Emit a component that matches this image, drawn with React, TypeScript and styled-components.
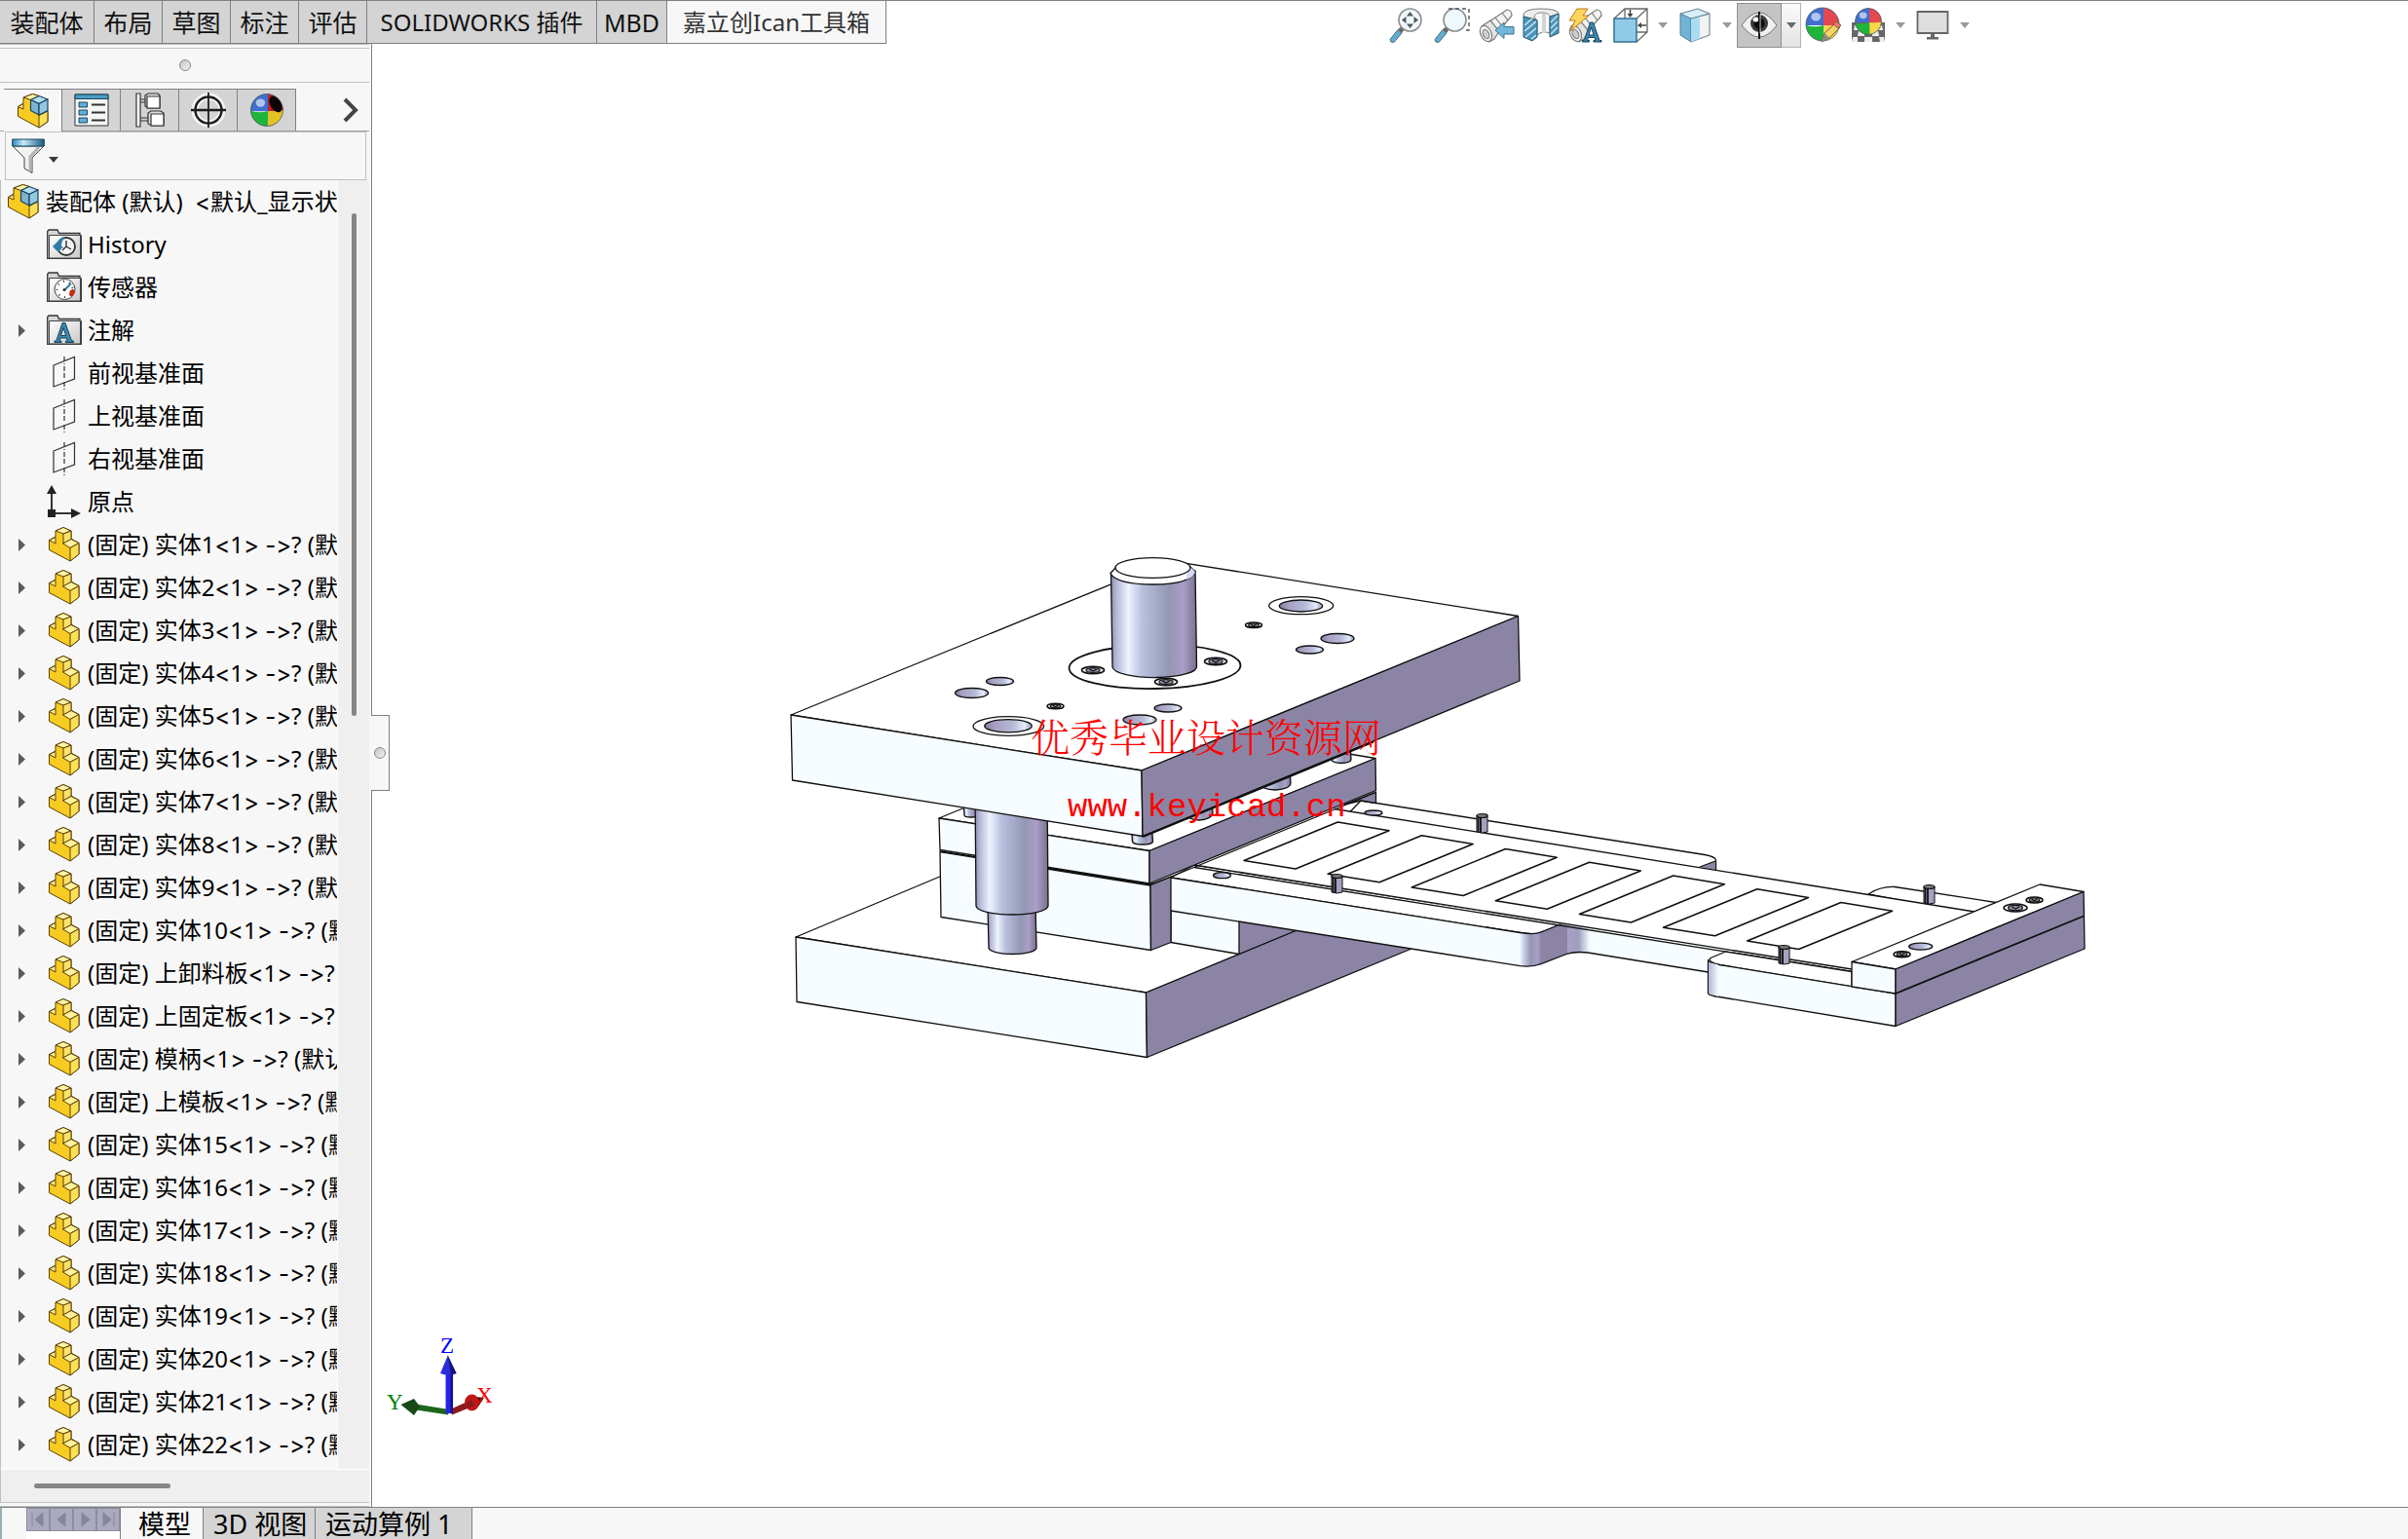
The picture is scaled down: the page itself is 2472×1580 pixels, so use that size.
import React from "react";
import styled, { createGlobalStyle, css } from "styled-components";

const line = "#808080";
const softLine = "#c0c0c0";
const face = "#f7f7f7";
const tabGrey = "#d4d4d4";

const GlobalStyle = createGlobalStyle`
  *, *::before, *::after { box-sizing: border-box; }
  body { margin: 0; background: #fff; }
  body, button, input {
    font-family: "Noto Sans", "Noto Sans CJK SC", sans-serif;
    font-size: 24px;
    color: #000;
  }
  button { padding: 0; border: 0; background: none; cursor: pointer; }
  ul { margin: 0; padding: 0; list-style: none; }
  svg { display: block; }
`;

const Shell = styled.div`
  display: flex;
  flex-direction: column;
  height: 100vh;
  overflow: hidden;
`;

/* ---------- command tabs and view toolbar ---------- */

const Header = styled.header`
  display: flex;
  flex: none;
  height: 45px;
  border-top: 1px solid ${line};
`;

const CommandTabs = styled.nav`
  display: flex;
  flex: none;
`;

const CommandTab = styled.button<{ $width: number; $active?: boolean; $compact?: boolean }>`
  width: ${(p) => p.$width}px;
  height: 44px;
  border-right: 1px solid ${line};
  border-bottom: 1px solid ${line};
  background: ${(p) => (p.$active ? face : tabGrey)};
  color: ${(p) => (p.$active ? "#333" : "#111")};
  font-size: ${(p) => (p.$compact ? 24 : 25)}px;
  line-height: 40px;
  white-space: nowrap;
`;

const Spacer = styled.div<{ $grow: number }>`
  flex: ${(p) => p.$grow} 1 0;
`;

const ViewToolbar = styled.div`
  display: flex;
  flex: none;
  height: 46px;
  margin-top: 2px;
  z-index: 1;
`;

const ToolButton = styled.button<{ $pressed?: boolean }>`
  display: flex;
  align-items: center;
  justify-content: center;
  width: 46px;
  height: 46px;
  ${(p) =>
    p.$pressed &&
    css`
      background: #c4c4c4;
      border: 1px solid #8e8e8e;
    `}
`;

const DropButton = styled.button<{ $pressed?: boolean }>`
  display: flex;
  align-items: center;
  justify-content: center;
  width: 20px;
  height: 46px;
  color: #9a9a9a;
  ${(p) =>
    p.$pressed &&
    css`
      color: #606a6c;
      background: linear-gradient(#fafafa, #e4e4e4);
      border: 1px solid #b4b4b4;
      border-left: 0;
    `}
`;

/* ---------- body ---------- */

const Body = styled.div`
  display: flex;
  flex: 1;
  min-height: 0;
`;

const Panel = styled.aside`
  display: flex;
  flex-direction: column;
  flex: none;
  width: 382px;
  padding-right: 2px;
  border-right: 1px solid ${line};
  background: ${face};
`;

const PanelEdge = styled.div`
  flex: none;
  height: 5px;
  border-top: 1px solid #b4bcc4;
  border-bottom: 1px solid ${softLine};
`;

const CollapseBar = styled.button`
  display: flex;
  flex: none;
  align-items: center;
  justify-content: center;
  height: 35px;
  border-bottom: 1px solid ${softLine};
`;

const Dot = styled.span`
  width: 12px;
  height: 12px;
  border: 1px solid #8a8a8a;
  border-radius: 50%;
  background: linear-gradient(135deg, #c4c4c4, #f4f4f4);
`;

const ManagerTabs = styled.div`
  display: flex;
  flex: none;
  height: 44px;
  margin-top: 6px;
  padding-left: 4px;
  border-bottom: 1px solid #a0a0a0;
`;

const ManagerTab = styled.button<{ $active?: boolean }>`
  display: flex;
  align-items: center;
  justify-content: center;
  width: 60px;
  height: ${(p) => (p.$active ? 44 : 43)}px;
  border-top: 1px solid ${line};
  border-right: 1px solid ${line};
  background: ${(p) => (p.$active ? face : tabGrey)};
`;

const MoreTabs = styled.button`
  width: 28px;
  margin-left: auto;
`;

const FilterBox = styled.div`
  display: flex;
  flex: none;
  height: 50px;
  margin: 0 3px 0 5px;
  border: 1px solid ${softLine};
`;

const FilterButton = styled.button`
  display: flex;
  align-items: center;
  gap: 4px;
  padding: 0 6px;
  color: #3c3c3c;
  svg + svg { margin-top: 8px; }
`;

const FilterInput = styled.input`
  flex: 1;
  min-width: 0;
  border: 0;
  outline: 0;
  background: transparent;
`;

const TreeArea = styled.div`
  display: grid;
  grid-template-columns: minmax(0, 1fr) 32px;
  flex: 1;
  min-height: 0;
  border-left: 1px solid ${softLine};
`;

const Tree = styled.ul`
  overflow: hidden;
  border-right: 1px solid #fff;
`;

const TreeRow = styled.li<{ $root?: boolean }>`
  display: grid;
  grid-template-columns: ${(p) => (p.$root ? "34px" : "30px 36px")} minmax(0, 1fr);
  column-gap: 6px;
  align-items: center;
  height: 44px;
  padding-left: ${(p) => (p.$root ? 6 : 11)}px;
`;

const Twisty = styled.button`
  display: flex;
  align-items: center;
  width: 24px;
  height: 30px;
  padding-left: 7px;
`;

const IconCell = styled.span`
  display: flex;
  justify-content: center;
`;

const RowText = styled.span`
  overflow: hidden;
  line-height: 36px;
  white-space: pre;
`;

const Sign = styled.span`
  font-family: Inter, sans-serif;
  font-variant-ligatures: none;
  font-feature-settings: "calt" 0, "liga" 0;
`;

const VerticalTrack = styled.div`
  padding: 34px 0 0 14px;
  background: #efefef;
`;

const VerticalThumb = styled.div`
  width: 5px;
  height: 40%;
  border-radius: 3px;
  background: #858585;
`;

const HorizontalTrack = styled.div`
  flex: none;
  height: 34px;
  padding: 14px 0 0 34px;
  border-top: 1px solid #fff;
  border-left: 1px solid ${softLine};
  background: #efefef;
`;

const HorizontalThumb = styled.div`
  width: 140px;
  height: 5px;
  border-radius: 3px;
  background: #858585;
`;

const PanelFoot = styled.div`
  flex: none;
  height: 5px;
  border-top: 1px solid ${softLine};
  border-bottom: 1px solid ${softLine};
`;

const Viewport = styled.main`
  position: relative;
  flex: 1;
  min-width: 0;
  background: #fff;
`;

const Scene = styled.svg`
  width: 100%;
  height: 100%;
`;

const PanelHandle = styled.button`
  position: absolute;
  top: 728px;
  top: calc(50% - 62px);
  left: -1px;
  display: flex;
  align-items: center;
  justify-content: center;
  width: 19px;
  height: 78px;
  border: 1px solid ${line};
  border-left: 0;
  background: ${face};
`;

const WatermarkTitle = styled.text`
  font-family: "Noto Serif CJK SC", "Noto Sans CJK SC", serif;
  font-size: 40px;
  font-weight: 300;
  fill: #f00;
`;

const WatermarkUrl = styled.text`
  font-family: "Liberation Mono", monospace;
  font-size: 34px;
  fill: #f00;
`;

const AxisName = styled.text`
  font-family: "Liberation Serif", serif;
  font-size: 23px;
`;

/* ---------- footer ---------- */

const Footer = styled.footer`
  display: flex;
  flex: none;
  height: 33px;
  overflow: hidden;
  border-top: 1px solid ${line};
  background: ${face};
`;

const FooterEdge = styled.div`
  width: 27px;
  border-left: 2px solid #93b0b4;
`;

const SheetNav = styled.div`
  display: flex;
  width: 97px;
  background: #fff;
  border-right: 1px solid ${line};
`;

const NavButton = styled.button`
  display: flex;
  align-items: center;
  justify-content: center;
  width: 24px;
  height: 24px;
  border: 1px solid #8d8da2;
  background: #a9a9c0;
`;

const SheetTab = styled.button<{ $width: number; $active?: boolean }>`
  width: ${(p) => p.$width}px;
  height: 34px;
  padding-left: ${(p) => (p.$active ? 18 : 10)}px;
  border-right: 1px solid ${line};
  background: ${(p) => (p.$active ? face : tabGrey)};
  font-size: 27px;
  line-height: 34px;
  text-align: left;
  white-space: nowrap;
`;

/* ---------- small icons ---------- */

const DownArrow = () => (
  <svg width="10" height="6" viewBox="0 0 10 6" aria-hidden="true">
    <path d="M0 0h10L5 6z" fill="currentColor" />
  </svg>
);

const PartIcon = () => (
  <svg width="32" height="36" viewBox="0 0 32 36" aria-hidden="true">
    <g stroke="#5b4108" strokeWidth="1" strokeLinejoin="round">
      <path d="M.5 13.5 7 10v-6l8-3.500 8 3.500v8l8 4.500v11.500l-9 7L.5 23.500z" fill="#f8cb22" />
      <path d="M.5 13.500 7 10.500V17z" fill="#fff09a" />
      <path d="M7 4l8-3.500 8 3.500-8 3z" fill="#fff3a6" />
      <path d="M15 7l8-3v8.500l-8 4.500z" fill="#fbe26a" />
      <path d="M14.500 17l8.500-4.500 8 4-9 5z" fill="#fff09a" />
      <path d="M22 21.500l9-5V28l-9 7z" fill="#fbe055" />
    </g>
  </svg>
);

const AssemblyIcon = () => (
  <svg width="32" height="36" viewBox="0 0 32 36" aria-hidden="true">
    <g stroke="#5b4108" strokeWidth="1" strokeLinejoin="round">
      <path d="M.5 13.500 6 10V4L15.500.5 22 2.500V20l9-2v11l-9 6L.5 23.500z" fill="#f8cb22" />
      <path d="M.5 13.500 6 10.500V16z" fill="#fff09a" />
      <path d="M6 4L15.500.5 22 2.500 13.500 6.500z" fill="#fff3a6" />
      <path d="M22 22.500l9-4.500v11l-9 6z" fill="#fbe055" />
    </g>
    <g stroke="#17455f" strokeWidth="1.200" strokeLinejoin="round">
      <path d="M13.500 6.500L22 2.500l9 3.500-9 4.500z" fill="#b5dcf0" />
      <path d="M13.500 6.500l8.500 4V22l-8.500-4.500z" fill="#7db3d0" />
      <path d="M22 10.500L31 6v11.500L22 22z" fill="#94c8e2" />
    </g>
  </svg>
);

const Folder = ({ children }: { children: React.ReactNode }) => (
  <svg width="36" height="32" viewBox="0 0 36 32" aria-hidden="true">
    <defs>
      <linearGradient id="folderFill" x1="0" y1="0" x2="1" y2="1">
        <stop offset="0" stopColor="#fff" />
        <stop offset="1" stopColor="#c9c9c9" />
      </linearGradient>
    </defs>
    <path d="M.7 30V2.500L2 1h9l1.500 3.500H34V7h1.300v23.300H.7z" fill="#d6d6d6" stroke="#333" strokeWidth="1.300" />
    <path d="M2.500 6.500h32v23.500h-32z" fill="url(#folderFill)" stroke="#444" strokeWidth="1" />
    {children}
  </svg>
);

const HistoryIcon = () => (
  <Folder>
    <circle cx="20" cy="18" r="9" fill="#f4f4f4" stroke="#333" strokeWidth="1.800" />
    <path d="M20 12v6l-4 4M20 18l5 3" stroke="#333" strokeWidth="1.400" fill="none" />
    <path d="M6 18l6-6q3-4 8-4-5 3-5 10h2l-5 6z" fill="#2e7ca6" />
  </Folder>
);

const SensorIcon = () => (
  <Folder>
    <circle cx="18.500" cy="18" r="10.500" fill="#fff" stroke="#444" strokeWidth="1" />
    <circle cx="18.500" cy="18" r="8" fill="none" stroke="#333" strokeWidth="2" strokeDasharray="1 5" />
    <path d="M18 19l7-7" stroke="#2e7ca6" strokeWidth="2" />
    <path d="M24 19h4.500c0 3-1 5-3 6.500l-2.500-2z" fill="#d8200c" />
    <circle cx="18" cy="18.500" r="1.500" fill="#333" />
  </Folder>
);

const LetterShape = () => (
  <path
    d="M6.500 20h7v-1.500h-2l.9-3h6.500l1 3h-2V20H26v-1.500h-2L17.500 0h-3L8.300 18.500H6.500zM13 13l2.500-8 2.700 8z"
    fill="#3d86ac"
    stroke="#16455e"
    strokeWidth="1"
  />
);

const NoteIcon = () => (
  <Folder>
    <g transform="translate(1.500 8.500)">
      <LetterShape />
    </g>
  </Folder>
);

const PlaneIcon = () => (
  <svg width="24" height="36" viewBox="0 0 24 36" fill="none" stroke="#333" strokeWidth="1.200" aria-hidden="true">
    <path d="M1 10L22.500 1.500v22.500L1 32z" />
    <path d="M12 1v8M12 27v8M12 11v14" strokeDasharray="5 2" />
  </svg>
);

const OriginIcon = () => (
  <svg width="36" height="36" viewBox="0 0 36 36" fill="#222" aria-hidden="true">
    <path d="M5 30V8M6 30h22" stroke="#333" strokeWidth="2" />
    <path d="M0 10L5 1l5 9zM25 25l10 5-10 5zM1 26h8v8H1z" />
  </svg>
);

const PropertyIcon = () => (
  <svg width="36" height="34" viewBox="0 0 36 34" aria-hidden="true">
    <path d="M1 1h34v32H1z" fill="#f6f6f6" stroke="#333" />
    <path d="M1 1h34v4.500H1z" fill="#4b9cc2" stroke="#17455f" />
    <path d="M5 9h8.500v5H5zM5 17h8.500v5H5zM5 25h8.500v5H5z" fill="#5fb0d8" stroke="#17455f" />
    <path d="M18 11.500h14M18 19.500h14M18 27.500h14" stroke="#333" strokeWidth="1.800" />
  </svg>
);

const ConfigIcon = () => (
  <svg width="30" height="36" viewBox="0 0 30 36" fill="#fff" stroke="#333" strokeWidth="1.200" aria-hidden="true">
    <path d="M1 1h4v34H1z" />
    <path d="M5 7h6M5 10h6M5 26h8M5 29h8" />
    <path d="M10 3l3-2h10l2 2v13H13l-3-2z" fill="#ddd" />
    <path d="M12 4h13v12H12z" />
    <path d="M13 21l3-2h10l3 2v13H17l-4-2z" fill="#ddd" />
    <path d="M16 22h13v12H16z" />
  </svg>
);

const DimensionIcon = () => (
  <svg width="36" height="36" viewBox="0 0 36 36" fill="none" stroke="#1c1c1c" aria-hidden="true">
    <circle cx="18" cy="18" r="14" stroke="#f4f4f4" strokeWidth="7" />
    <circle cx="18" cy="18" r="13.500" strokeWidth="2.400" />
    <path d="M18 0v36" strokeWidth="1.800" />
    <path d="M0 18h36" strokeWidth="2.400" />
  </svg>
);

const Ball = ({ cx, cy, r, dark }: { cx: number; cy: number; r: number; dark?: boolean }) => (
  <g>
    <clipPath id={`ball${cx}-${r}`}>
      <circle cx={cx} cy={cy} r={r} />
    </clipPath>
    <g clipPath={`url(#ball${cx}-${r})`}>
      <path d={`M0 0h${cx + 1}q2 ${cy / 2} 0 ${cy + 1}H0z`} fill="#3f6fd0" />
      <path d={`M${cx + 1} 0H40v${cy}q-10 3-${39 - cx} 1z`} fill={dark ? "#c21d2a" : "#e5484f"} />
      <path d={`M0 ${cy}q${cx / 2} 4 ${cx + 1} 1q1 8-1 20H0z`} fill="#1fb53a" />
      <path d={`M${cx + 1} ${cy + 1}q8 1 20-2v25h-21q2-12 1-23z`} fill={dark ? "#e2c322" : "#f8d648"} />
      {dark && <ellipse cx={cx + 9} cy={cy - 6} rx="5.500" ry="9" transform={`rotate(-32 ${cx + 9} ${cy - 6})`} fill="#0c0606" />}
      <ellipse cx={cx - r / 2.5} cy={cy - r / 2.2} rx={r / 3.5} ry={r / 4} fill="#fff" opacity=".6" />
    </g>
    <circle cx={cx} cy={cy} r={r} fill="none" stroke="#456" strokeWidth=".8" />
  </g>
);

const DisplayManagerIcon = () => (
  <svg width="36" height="36" viewBox="0 0 36 36" aria-hidden="true">
    <Ball cx={18} cy={18} r={16.5} dark />
  </svg>
);

const FunnelIcon = () => (
  <svg width="34" height="36" viewBox="0 0 34 36" aria-hidden="true">
    <defs>
      <linearGradient id="funnelTop">
        <stop offset="0" stopColor="#2b87b5" />
        <stop offset=".35" stopColor="#c6ecfa" />
        <stop offset="1" stopColor="#1c5a80" />
      </linearGradient>
    </defs>
    <path d="M1 8l12 12v11l8 4.500V20L33 8z" fill="#f2f2f2" stroke="#444" />
    <path d="M18 20l10-11M19 20v14" stroke="#b4b4b4" strokeWidth="3" />
    <path d="M.7 1h32.600v7H.7z" fill="url(#funnelTop)" stroke="#17455f" />
  </svg>
);

const Lens = ({ children }: { children?: React.ReactNode }) => (
  <svg width="38" height="36" viewBox="0 0 38 36" aria-hidden="true">
    <path d="M2 32.500l8-10 4 3.500-8 9.500q-4 .5-4-3z" fill="#62acd2" stroke="#4c6a7a" />
    <path d="M10 22l4 4 3-4-3-3z" fill="#666" />
    <circle cx="22.500" cy="12.500" r="11.500" fill="#eef8fd" stroke="#8c8c8c" strokeWidth="1.600" />
    {children}
  </svg>
);

const ZoomFitIcon = () => (
  <Lens>
    <path d="M22.500 4l3.500 4.500h-7zM22.500 21l3.500-4.500h-7zM14 12.500l4.500-3.500v7zM31 12.500L26.500 9v7z" fill="#555" />
  </Lens>
);

const ZoomAreaIcon = () => (
  <Lens>
    <path d="M16 1h21v22H31" fill="none" stroke="#555" strokeWidth="1.400" strokeDasharray="4 3" />
  </Lens>
);

const Scope = () => (
  <g stroke="#7c7c7c" strokeWidth="1.200">
    <path d="M12 14L30 2q5 0 5 6L18 28z" fill="#f2f2f2" />
    <path d="M18 10l8 10M25 5l6 8" fill="none" />
    <path d="M4 19l9-6 9 11-5 8-5 3z" fill="#e4e4e4" />
    <ellipse cx="8.500" cy="26.500" rx="5.500" ry="8.500" transform="rotate(-25 8.500 26.500)" fill="#fafafa" />
    <ellipse cx="8.500" cy="27" rx="3" ry="5" transform="rotate(-25 8.500 27)" fill="#d0d0d0" />
  </g>
);

const PreviousViewIcon = () => (
  <svg width="38" height="36" viewBox="0 0 38 36" aria-hidden="true">
    <Scope />
    <path d="M18 23l9-8v4.500h10v7.500H27v4.500z" fill="#72b8da" stroke="#3d7590" />
  </svg>
);

const SectionIcon = () => (
  <svg width="38" height="36" viewBox="0 0 38 36" aria-hidden="true">
    <path d="M1 7q1-6 18-6t18 5v5l-9 3V26q-8-3-13 2V12L1 9z" fill="#ececec" stroke="#777" />
    <path d="M12 9q1-4 8-4t8 4v17q-8-3-13 2V13z" fill="#fafafa" stroke="#888" />
    <path d="M20 6h4v20h-4z" fill="#d4d4d4" />
    <path d="M1 9l14 4v17l-5 4-9-4z" fill="#4c93b8" stroke="#2a5d78" />
    <path d="M28 9l9-3v20l-9 4z" fill="#4c93b8" stroke="#2a5d78" />
    <path d="M2 18l8-7M2 24l12-10M3 30l11-9M9 32l5-4M29 15l7-7M29 21l7-7M29 27l7-7" stroke="#d2ecf8" strokeWidth="1.300" />
  </svg>
);

const DynamicNoteIcon = () => (
  <svg width="38" height="36" viewBox="0 0 38 36" aria-hidden="true">
    <Scope />
    <path d="M10 1h11l-5 7h6L3 24l5-11H2z" fill="#ffd65c" stroke="#b8741c" />
    <g transform="translate(9 15)">
      <LetterShape />
    </g>
  </svg>
);

const OrientationIcon = () => (
  <svg width="36" height="36" viewBox="0 0 36 36" fill="none" stroke="#666" aria-hidden="true">
    <path d="M1 11L12 1h23v24L24 35M12 1v10M24 11L35 1M24 25h11" strokeWidth="1.300" />
    <path d="M1 11h23v24H1z" fill="#8fcbe8" stroke="#33708f" strokeWidth="1.500" />
    <path d="M17.500 2v7M34 18h-7" stroke="#444" strokeWidth="1.600" />
    <path d="M14.500 6h6l-3 4zM29 15v6l-4-3z" fill="#444" stroke="none" />
  </svg>
);

const DisplayStyleIcon = () => (
  <svg width="32" height="36" viewBox="0 0 32 36" stroke="#5d7c8c" strokeLinejoin="round" aria-hidden="true">
    <path d="M1 6l11 5v24L1 28z" fill="#6fb4d6" />
    <path d="M12 11l19-5v22l-19 7z" fill="#f2f2f2" />
    <path d="M12 11l9-2.500v23L12 35z" fill="#a9dcf3" stroke="none" />
    <path d="M1 6l18-5 12 5-19 5z" fill="#d8eff9" />
  </svg>
);

const EyeIcon = () => (
  <svg width="38" height="36" viewBox="0 0 38 36" aria-hidden="true">
    <path d="M1 18Q10 5 19 5t18 13Q28 30 19 30T1 18z" fill="#f0f0f0" stroke="#777" />
    <circle cx="19" cy="16" r="9" fill="#3a3a3a" />
    <circle cx="19" cy="16" r="5.500" fill="#0a0a0a" />
    <ellipse cx="15.500" cy="12" rx="3" ry="2.500" fill="#fff" />
    <path d="M19 4v28" stroke="#000" strokeWidth="1.800" />
    <path d="M20 7v19" stroke="#fff" strokeWidth=".8" />
  </svg>
);

const AppearanceIcon = () => (
  <svg width="40" height="38" viewBox="0 0 40 38" aria-hidden="true">
    <Ball cx={19} cy={18} r={17} />
    <path d="M18 36l3-9 11-10 5 4-11 11z" fill="#f3d567" stroke="#7a6232" />
    <path d="M30 18l3-3 5 4-3 3z" fill="#e77" stroke="#7a6232" />
    <path d="M18 36l3-9 5 5z" fill="#888" />
  </svg>
);

const SceneIcon = () => (
  <svg width="36" height="36" viewBox="0 0 36 36" aria-hidden="true">
    <path d="M1 15h34v20H1z" fill="#666" />
    <path d="M4 18h5v5H3zM27 18h5l1 5h-6zM8 24h6v5H7zM22 24h6l1 5h-7zM2 30h5v5H1zM14 30h8v5h-8zM29 30h5l1 5h-5z" fill="#eee" />
    <Ball cx={18} cy={14} r={13.5} />
  </svg>
);

const MonitorIcon = () => (
  <svg width="34" height="32" viewBox="0 0 34 32" aria-hidden="true">
    <path d="M1.500 2h31v22h-31z" fill="#dedede" stroke="#666" strokeWidth="1.800" />
    <path d="M15 25h4v4h-4zM11 28h12v2.500H11z" fill="#666" />
  </svg>
);

/* ---------- data ---------- */

const commandTabs = [
  { label: "装配体", width: 97 },
  { label: "布局", width: 70 },
  { label: "草图", width: 70 },
  { label: "标注", width: 70 },
  { label: "评估", width: 70 },
  { label: "SOLIDWORKS 插件", width: 236, compact: true },
  { label: "MBD", width: 72 },
  { label: "嘉立创Ican工具箱", width: 225, active: true, compact: true },
];

type Tool = { name: string; icon: React.ReactNode; menu?: boolean; pressed?: boolean };

const tools: Tool[] = [
  { name: "整屏显示全图", icon: <ZoomFitIcon /> },
  { name: "局部放大", icon: <ZoomAreaIcon /> },
  { name: "上一视图", icon: <PreviousViewIcon /> },
  { name: "剖面视图", icon: <SectionIcon /> },
  { name: "动态注解视图", icon: <DynamicNoteIcon /> },
  { name: "视图定向", icon: <OrientationIcon />, menu: true },
  { name: "显示样式", icon: <DisplayStyleIcon />, menu: true },
  { name: "隐藏/显示项目", icon: <EyeIcon />, menu: true, pressed: true },
  { name: "编辑外观", icon: <AppearanceIcon /> },
  { name: "应用布景", icon: <SceneIcon />, menu: true },
  { name: "视图设置", icon: <MonitorIcon />, menu: true },
];

const managerTabs = [
  { name: "设计树", icon: <AssemblyIcon />, active: true },
  { name: "属性", icon: <PropertyIcon /> },
  { name: "配置", icon: <ConfigIcon /> },
  { name: "尺寸专家", icon: <DimensionIcon /> },
  { name: "外观", icon: <DisplayManagerIcon /> },
];

type Node = { label: string; icon: React.ReactNode; open?: boolean };

const bodyName = (n: number) => `实体${n}`;
const partNames = [
  ...Array.from({ length: 10 }, (_, i) => bodyName(i + 1)),
  "上卸料板",
  "上固定板",
  "模柄",
  "上模板",
  ...Array.from({ length: 8 }, (_, i) => bodyName(i + 15)),
];

const nodes: Node[] = [
  { label: "History", icon: <HistoryIcon /> },
  { label: "传感器", icon: <SensorIcon /> },
  { label: "注解", icon: <NoteIcon />, open: true },
  { label: "前视基准面", icon: <PlaneIcon /> },
  { label: "上视基准面", icon: <PlaneIcon /> },
  { label: "右视基准面", icon: <PlaneIcon /> },
  { label: "原点", icon: <OriginIcon /> },
  ...partNames.map((name) => ({
    label: `(固定) ${name}<1> ->? (默认)`,
    icon: <PartIcon />,
    open: true,
  })),
];

const Label = ({ text }: { text: string }) => (
  <RowText>
    {text.split(/([<>-]+)/).map((piece, i) => (i % 2 ? <Sign key={i}>{piece}</Sign> : piece))}
  </RowText>
);

/* ---------- model drawing ---------- */

const light = "#f6fcff";
const shade = "#8b84a5";

const Cylinder = ({ x, w, top, bottom, ry }: { x: number; w: number; top: number; bottom: number; ry: number }) => (
  <path
    d={`M${x} ${top}L${x + 1} ${bottom}A${w / 2} ${ry} 0 0 0 ${x + w + 1} ${bottom}L${x + w} ${top}`}
    fill="url(#barrel)"
  />
);

const Hole = ({ x, y, rx, ry }: { x: number; y: number; rx: number; ry: number }) => (
  <ellipse cx={x} cy={y} rx={rx} ry={ry} fill="url(#bore)" />
);

const Bolt = ({ x, y, rx, ry }: { x: number; y: number; rx: number; ry: number }) => (
  <g strokeWidth="1.200">
    <ellipse cx={x} cy={y} rx={rx} ry={ry} fill="#fff" strokeWidth="1.600" />
    <ellipse cx={x} cy={y} rx={rx * 0.62} ry={ry * 0.66} fill="#8f90a4" />
    <path d={`M${x - rx / 3} ${y - 1}l${rx / 3} 2 ${rx / 3}-2`} fill="none" />
  </g>
);

const Pin = ({ x, y }: { x: number; y: number }) => (
  <g>
    <path d={`M${x} ${y + 1}v17q5.500 2 11 0v-17z`} fill="#a7a1c0" strokeWidth="1" />
    <path d={`M${x + 1.5} ${y + 2}v16M${x + 4} ${y + 2}v17`} strokeWidth="1.800" />
    <ellipse cx={x + 5.5} cy={y + 1.5} rx="5.500" ry="2" fill="#777" strokeWidth="1.200" />
  </g>
);

const slots = Array.from({ length: 7 }, (_, i) => i);

const Model = () => (
  <g stroke="#101010" strokeWidth="1.300" strokeLinejoin="round" fill="#fff">
    {/* die base */}
    <path d="M817 962L1010 881 1400 940 1176.500 1019z" />
    <path d="M817 962L1176.500 1019 1177.500 1085.500 818 1028.500z" fill={light} />
    <path d="M1176.500 1019L1330 955.500 1330 940 1449 974 1177.500 1085.500z" fill={shade} />
    <path d="M1272 940L1272 979.500 1330 955.500 1400 950z" fill={shade} stroke="none" />
    <path d="M1272 979.500L1330 955.500" />
    <path d="M1202 930L1272 940 1272 979.500 1202 967.500z" fill={light} />

    {/* guide rails under the strip */}
    <path d="M1397 822L1750 877.500Q1761 879.500 1761.500 883V894L1370 850z" />
    <path d="M1745 890L1761 884V893z" fill={shade} stroke="none" />
    <path d="M1745 890L1761 884" />
    <path d="M1918 918Q1930 910 1945 910.500L2049 926.500 2030 940z" />
    <path d="M1202 901L1226 888 1603 948Q1598 951 1582 957 1575 960 1560.500 957.500z" />
    <path d="M1202 901L1560.500 957.500V991.700L1202 935z" fill={light} stroke="none" />
    <path d="M1610 949L1753.500 973V998L1630 978H1610z" fill={light} stroke="none" />
    <path d="M1560.500 957.500Q1575 960 1582 957V990.500Q1573 993 1560.500 991.700z" fill="url(#bendOut)" stroke="none" />
    <path d="M1582 957L1603 948.500 1610 949V979.300L1582 990.500z" fill={shade} stroke="none" />
    <path d="M1609 949L1632 953V978Q1618 977 1609 979.500z" fill="url(#bendIn)" stroke="none" />
    <path d="M1202 901L1560.500 957.500Q1575 960 1582 957L1603 948.500" fill="none" />
    <path d="M1202 935L1560.500 991.700Q1573 993 1582 989.500L1608 979.500Q1617 976.500 1630 978L1753.500 998" fill="none" />

    {/* stock strip */}
    <path d="M1226 888L1370 830.500 2027 936 1901 990V997z" stroke="none" />
    <path d="M1370 830.500L2027 936M1226 888L1901 995M1226 890.500L1901 997.500" fill="none" />
    {slots.map((i) => (
      <path
        key={i}
        d="M1373.300 844L1426 852.700 1330 892 1277 883.500z"
        transform={`translate(${i * 86.1} ${i * 13.75})`}
        fill="none"
        strokeWidth="1.600"
      />
    ))}
    <Hole x={1410} y={834.5} rx={9} ry={2.5} />
    <Hole x={1254.5} y={898.7} rx={9} ry={3} />

    {/* stop block at the strip end */}
    <path d="M1771.500 977L1756 983.500Q1752 987 1765 990.500L1901 1013 1901 997.500z" />
    <path d="M1753.500 985.500Q1754 989 1765 990.500L1946 1020V1053.500L1765 1023.500Q1754 1022 1753.500 1019.500z" fill={light} />
    <path d="M1754.200 988L1764 990.500V1023L1754.200 1020z" fill="url(#edgeFade)" stroke="none" />
    <path d="M1901 987.500L2094 908 2139 915.500 1946 995z" />
    <path d="M1901 987.500L1946 995V1020L1901 1013z" fill={light} />
    <path d="M1946 995L2139 915.500 2140 974 1946 1053.500z" fill={shade} />
    <path d="M1946 1020L2139 940.500" strokeWidth="1.800" />
    <Hole x={1971.7} y={971.7} rx={12} ry={3.5} />
    <Bolt x={1952.5} y={979.7} rx={8.5} ry={3} />
    <Bolt x={2069} y={932} rx={12} ry={4} />
    <Bolt x={2088.5} y={924} rx={8.5} ry={3} />
    <Pin x={1516} y={836} />
    <Pin x={1367} y={898} />
    <Pin x={1975} y={909} />
    <Pin x={1826} y={971} />

    {/* lower die block */}
    <path d="M965 874L1181 908 1181.500 975.500 966 941.500z" fill={light} />
    <path d="M1181 908L1202 900V967.500L1181.500 975.500z" fill={shade} />
    <path d="M1380 826L1412.500 813V824.500L1397 822z" fill={shade} />

    {/* upper backing plate */}
    <path d="M964 840L1010 821 1385 774 1412 778.500 1180 873.500z" />
    <path d="M964 840L1180 873.500V907L965 872.500z" fill={light} />
    <path d="M1180 873.500L1412 778.500 1412.500 811.500 1180 907z" fill={shade} />
    <path d="M965 874.500L1180.500 909 1412.500 813.500" fill="none" />
    <Cylinder x={1366} w={20} top={764} bottom={780} ry={3.5} />
    <Cylinder x={1292} w={32} top={790} bottom={804} ry={7} />
    <Cylinder x={1216} w={28} top={824} bottom={834} ry={8} />
    <Cylinder x={1161.5} w={21} top={850} bottom={864} ry={3} />
    <Cylinder x={989} w={14} top={824} bottom={837} ry={2} />

    {/* guide pillar */}
    <Cylinder x={1014} w={49} top={930} bottom={973} ry={6.5} />
    <Cylinder x={1001} w={74} top={810} bottom={930} ry={9} />

    {/* top plate */}
    <path d="M812 734L1200 575.600 1558.500 632.500 1172 791z" />
    <path d="M812 734L1172 791 1173 858.500 813.500 801z" fill={light} />
    <path d="M1172 791L1558.500 632.500 1560 699 1173 858.500z" fill={shade} />
    <path d="M1173 859L1410 761.500" strokeWidth="2.400" />
    <Hole x={997.5} y={711.5} rx={17} ry={5} />
    <Hole x={1026.5} y={699.5} rx={14} ry={4} />
    <Hole x={1170} y={739} rx={17} ry={5} />
    <Hole x={1199} y={727} rx={14} ry={4} />
    <Hole x={1373} y={655.5} rx={17} ry={5} />
    <Hole x={1344.5} y={667} rx={14} ry={4} />
    <ellipse cx="1035.300" cy="745.500" rx="36.300" ry="9.800" />
    <Hole x={1035} y={745.3} rx={24.3} ry={6.6} />
    <ellipse cx="1335.700" cy="621.700" rx="33" ry="9" />
    <Hole x={1335.5} y={622} rx={22.2} ry={6} />
    <Bolt x={1083.5} y={725} rx={8.5} ry={2.7} />
    <Bolt x={1287} y={641.7} rx={8.5} ry={2.7} />

    {/* shank and its flange */}
    <ellipse cx="1185.500" cy="684.500" rx="88" ry="22.500" transform="rotate(-1 1185.500 684.500)" strokeWidth="1.800" />
    <Bolt x={1122} y={688} rx={11.5} ry={3.7} />
    <Bolt x={1197} y={700} rx={11.5} ry={3.7} />
    <Bolt x={1248} y={679} rx={11.5} ry={3.7} />
    <path d="M1140.500 588L1142 685A43.200 11 0 0 0 1228.500 684L1227 586z" fill="url(#barrel)" />
    <path d="M1145 583L1140 588.500Q1146 600 1184 600T1227 587L1222 582z" />
    <path d="M1218 590L1222 582 1227 587Q1226 592 1218 595z" fill="#d6d8f4" stroke="none" />
    <ellipse cx="1183.500" cy="583" rx="38.500" ry="10.300" />
  </g>
);

const Triad = () => (
  <g>
    <path d="M461 1447L427 1441.500V1447.500L460 1452.500z" fill="#1c661c" />
    <path d="M411.500 1442L425 1436 431 1444 425 1453z" fill="#174a17" />
    <path d="M462 1447L482 1438 485 1444 464 1452.500z" fill="#8c1a1a" />
    <path d="M488 1434L497 1435 491 1444z" fill="#301414" />
    <ellipse cx="484.500" cy="1440" rx="7.500" ry="8.500" fill="#c01818" />
    <path d="M478 1440L484 1437 487 1443 480 1446z" fill="#8c1a1a" />
    <path d="M457.500 1410H464.500V1451H457.500z" fill="#2424e4" />
    <path d="M462.500 1410H465V1451H462.500z" fill="#12128c" />
    <path d="M459.700 1391.500L468.500 1410Q460 1413 452 1410z" fill="#2c2cdc" />
    <path d="M459.700 1391.500L468.500 1410 463 1411.500z" fill="#14147c" />
    <AxisName x="452" y="1389" fill="#0000ff">Z</AxisName>
    <AxisName x="397" y="1447" fill="#008000">Y</AxisName>
    <AxisName x="489" y="1440" fill="#ff0000">X</AxisName>
  </g>
);

const Graphics = () => (
  <Scene viewBox="382 45 2090 1502" role="img" aria-label="装配体模型">
    <defs>
      <linearGradient id="barrel">
        <stop offset="0" stopColor="#8f8cab" />
        <stop offset=".06" stopColor="#b3b6d6" />
        <stop offset=".2" stopColor="#eef3ff" />
        <stop offset=".36" stopColor="#b9c1df" />
        <stop offset=".68" stopColor="#9397b3" />
        <stop offset=".84" stopColor="#ab9ec8" />
        <stop offset="1" stopColor="#77718d" />
      </linearGradient>
      <linearGradient id="bore">
        <stop offset="0" stopColor="#857f9d" />
        <stop offset=".22" stopColor="#a99fc4" />
        <stop offset=".6" stopColor="#b4bbd6" />
        <stop offset=".85" stopColor="#e4ebfb" />
        <stop offset="1" stopColor="#9a97b4" />
      </linearGradient>
      <linearGradient id="bendOut">
        <stop offset="0" stopColor="#eaf0ff" />
        <stop offset=".5" stopColor="#9397b3" />
        <stop offset=".85" stopColor="#ab9ec8" />
        <stop offset="1" stopColor={shade} />
      </linearGradient>
      <linearGradient id="bendIn">
        <stop offset="0" stopColor="#ab9ec8" />
        <stop offset=".5" stopColor="#9aa0be" />
        <stop offset="1" stopColor={light} />
      </linearGradient>
      <linearGradient id="edgeFade">
        <stop offset="0" stopColor="#b3b6d6" />
        <stop offset="1" stopColor={light} />
      </linearGradient>
    </defs>
    <Model />
    <WatermarkTitle x="1058" y="772">优秀毕业设计资源网</WatermarkTitle>
    <WatermarkUrl x="1096" y="838">www.keyicad.cn</WatermarkUrl>
    <Triad />
  </Scene>
);

const navShapes = [
  { name: "第一个", d: "M4 3v14M15 3v14L7 10z" },
  { name: "上一个", d: "M14 3v14L6 10z" },
  { name: "下一个", d: "M7 3v14l8-7z" },
  { name: "最后一个", d: "M16 3v14M5 3v14l8-7z" },
];

const sheetTabs = [
  { label: "模型", width: 85, active: true },
  { label: "3D 视图", width: 115 },
  { label: "运动算例 1", width: 161 },
];

export default function App() {
  return (
    <Shell>
      <GlobalStyle />
      <Header>
        <CommandTabs>
          {commandTabs.map((t) => (
            <CommandTab key={t.label} $width={t.width} $active={t.active} $compact={t.compact}>
              {t.label}
            </CommandTab>
          ))}
        </CommandTabs>
        <Spacer $grow={511} />
        <ViewToolbar>
          {tools.map((t) => (
            <React.Fragment key={t.name}>
              <ToolButton $pressed={t.pressed} aria-label={t.name}>
                {t.icon}
              </ToolButton>
              {t.menu && (
                <DropButton $pressed={t.pressed} aria-label={`${t.name}菜单`}>
                  <DownArrow />
                </DropButton>
              )}
            </React.Fragment>
          ))}
        </ViewToolbar>
        <Spacer $grow={445} />
      </Header>

      <Body>
        <Panel>
          <PanelEdge />
          <CollapseBar aria-label="折叠">
            <Dot />
          </CollapseBar>
          <ManagerTabs>
            {managerTabs.map((t) => (
              <ManagerTab key={t.name} $active={t.active} aria-label={t.name}>
                {t.icon}
              </ManagerTab>
            ))}
            <MoreTabs aria-label="更多">
              <svg width="20" height="26" viewBox="0 0 20 26" aria-hidden="true">
                <path d="M3 2l11 11L3 24" fill="none" stroke="#444" strokeWidth="4" />
              </svg>
            </MoreTabs>
          </ManagerTabs>
          <FilterBox>
            <FilterButton aria-label="过滤器">
              <FunnelIcon />
              <DownArrow />
            </FilterButton>
            <FilterInput aria-label="过滤" />
          </FilterBox>
          <TreeArea>
            <Tree>
              <TreeRow $root>
                <IconCell>
                  <AssemblyIcon />
                </IconCell>
                <Label text="装配体 (默认)  <默认_显示状态-1>" />
              </TreeRow>
              {nodes.map((n) => (
                <TreeRow key={n.label}>
                  {n.open ? (
                    <Twisty aria-label="展开">
                      <svg width="7" height="13" viewBox="0 0 7 13" aria-hidden="true">
                        <path d="M0 0l7 6.500L0 13z" fill="#5c5c5c" />
                      </svg>
                    </Twisty>
                  ) : (
                    <span />
                  )}
                  <IconCell>{n.icon}</IconCell>
                  <Label text={n.label} />
                </TreeRow>
              ))}
            </Tree>
            <VerticalTrack>
              <VerticalThumb />
            </VerticalTrack>
          </TreeArea>
          <HorizontalTrack>
            <HorizontalThumb />
          </HorizontalTrack>
          <PanelFoot />
        </Panel>
        <Viewport>
          <Graphics />
          <PanelHandle aria-label="隐藏面板">
            <Dot />
          </PanelHandle>
        </Viewport>
      </Body>

      <Footer>
        <FooterEdge />
        <SheetNav>
          {navShapes.map((s) => (
            <NavButton key={s.name} aria-label={s.name}>
              <svg width="20" height="20" viewBox="0 0 20 20" aria-hidden="true">
                <path d={s.d} fill="#85859c" stroke="#85859c" />
              </svg>
            </NavButton>
          ))}
        </SheetNav>
        {sheetTabs.map((t) => (
          <SheetTab key={t.label} $width={t.width} $active={t.active}>
            {t.label}
          </SheetTab>
        ))}
      </Footer>
    </Shell>
  );
}
